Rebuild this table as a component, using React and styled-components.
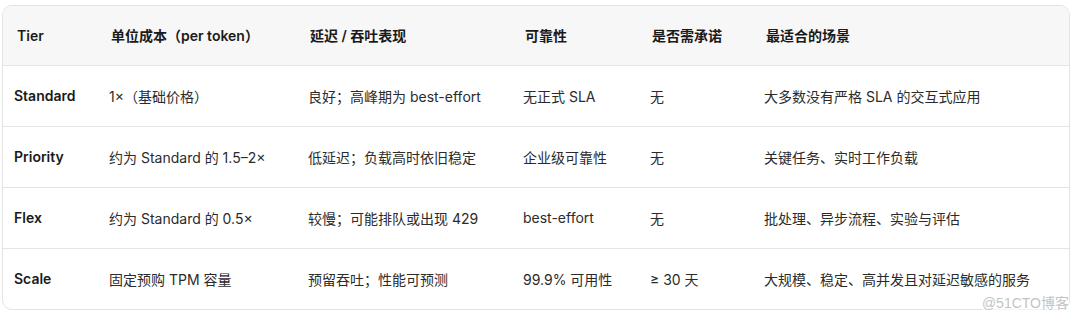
import styled, { createGlobalStyle } from 'styled-components';

const GlobalStyle = createGlobalStyle`
  body {
    margin: 0;
    background: #ffffff;
    font-family: Inter, "Noto Sans CJK SC", sans-serif;
    color: #1f1f1f;
  }
`;

const Page = styled.div`
  position: relative;
  padding: 5px 0 0 2px;
  width: 1068px;
`;

const Card = styled.div`
  border: 1px solid #e3e3e3;
  border-radius: 10px;
  overflow: hidden;
`;

const Table = styled.table`
  width: 100%;
  border-collapse: collapse;
  table-layout: fixed;
  font-size: 14px;
`;

const HeadRow = styled.tr`
  background: #f7f7f7;
  height: 59px;
`;

const Row = styled.tr`
  height: 61px;
  border-top: 1px solid #e5e5e5;
`;

const Th = styled.th`
  text-align: left;
  font-weight: 600;
  padding: 0 10px 0 ${(p) => (p.$first ? 14 : 12)}px;
  color: #1a1a1a;
`;

const Td = styled.td`
  padding: 0 10px 0 ${(p) => (p.$strong ? 11 : 10)}px;
  font-weight: ${(p) => (p.$strong ? 600 : 400)};
  color: ${(p) => (p.$strong ? '#1a1a1a' : '#2b2b2b')};
  white-space: nowrap;
`;

const Watermark = styled.div`
  position: absolute;
  right: 1px;
  bottom: -2px;
  font-size: 14px;
  color: #c4c4c4;
  font-family: "Liberation Sans", "Noto Sans CJK SC", sans-serif;
  background: rgba(255, 255, 255, 0.6);
`;

const widths = [96, 199, 215, 127, 114, 315];

const headers = ['Tier', '单位成本（per token）', '延迟 / 吞吐表现', '可靠性', '是否需承诺', '最适合的场景'];

const rows = [
  ['Standard', '1×（基础价格）', '良好；高峰期为 best-effort', '无正式 SLA', '无', '大多数没有严格 SLA 的交互式应用'],
  ['Priority', '约为 Standard 的 1.5–2×', '低延迟；负载高时依旧稳定', '企业级可靠性', '无', '关键任务、实时工作负载'],
  ['Flex', '约为 Standard 的 0.5×', '较慢；可能排队或出现 429', 'best-effort', '无', '批处理、异步流程、实验与评估'],
  ['Scale', '固定预购 TPM 容量', '预留吞吐；性能可预测', '99.9% 可用性', '≥ 30 天', '大规模、稳定、高并发且对延迟敏感的服务'],
];

function App() {
  return (
    <Page>
      <GlobalStyle />
      <Card>
        <Table>
          <colgroup>
            {widths.map((w, i) => (
              <col key={i} style={{ width: w }} />
            ))}
          </colgroup>
          <thead>
            <HeadRow>
              {headers.map((h, i) => (
                <Th key={h} $first={i === 0}>{h}</Th>
              ))}
            </HeadRow>
          </thead>
          <tbody>
            {rows.map((r) => (
              <Row key={r[0]}>
                {r.map((c, i) => (
                  <Td key={i} $strong={i === 0}>{c}</Td>
                ))}
              </Row>
            ))}
          </tbody>
        </Table>
      </Card>
      <Watermark>@51CTO博客</Watermark>
    </Page>
  );
}

export default App;
